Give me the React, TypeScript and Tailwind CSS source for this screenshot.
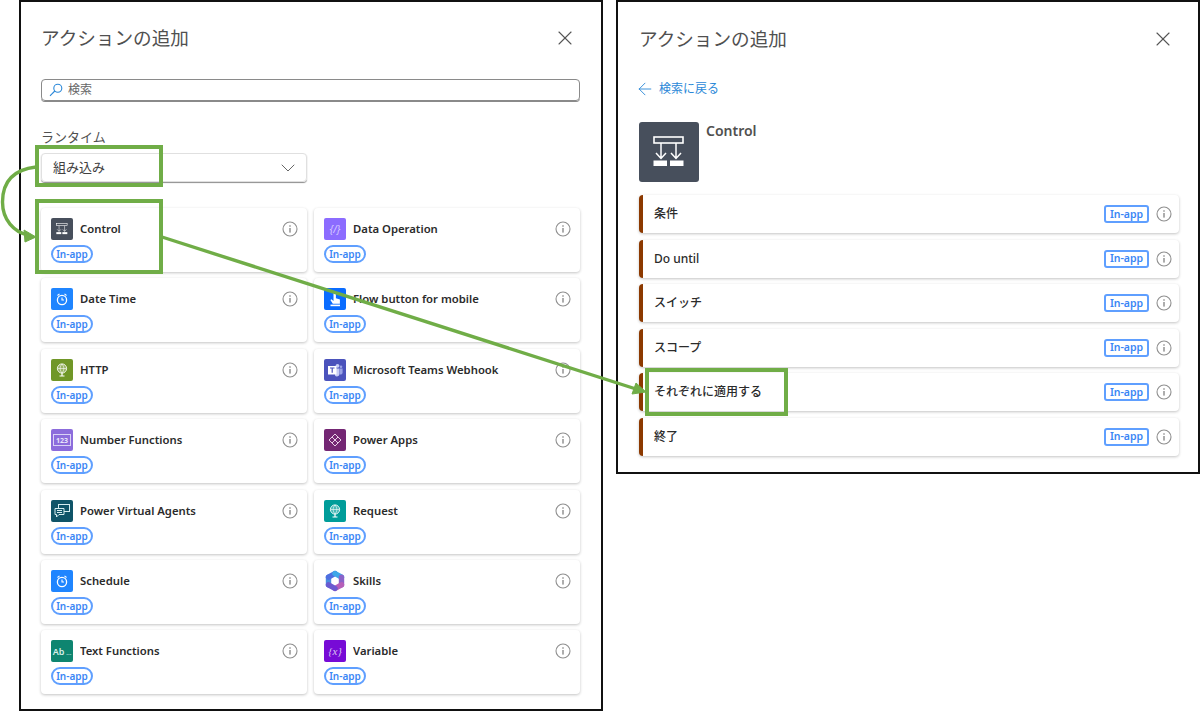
import { X, ChevronDown, ArrowLeft } from "lucide-react"
import type { ReactNode } from "react"

const font = "[font-family:'Noto_Sans','Noto_Sans_CJK_JP',sans-serif]"

function InfoIcon() {
  return (
    <svg width="16" height="16" viewBox="0 0 16 16" fill="none" className="shrink-0">
      <circle cx="8" cy="8" r="7" stroke="#8f8f8f" strokeWidth="1.1" />
      <rect x="7.4" y="7" width="1.2" height="4.6" fill="#777" />
      <circle cx="8" cy="5" r="0.8" fill="#777" />
    </svg>
  )
}

function ControlGlyph({ size }: { size: number }) {
  return (
    <svg width={size} height={size} viewBox="0 0 60 60" fill="none">
      <rect x="15" y="15" width="29" height="6" stroke="#fff" strokeWidth="1.6" />
      <path d="M22 21V36.5M37 21V36.5M17 31l5 5.5 5-5.5M32 31l5 5.5 5-5.5" stroke="#fff" strokeWidth="1.5" />
      <rect x="14.5" y="38.5" width="13.5" height="5.5" fill="#fff" />
      <rect x="31" y="38.5" width="13.5" height="5.5" fill="#fff" />
    </svg>
  )
}

function Clock() {
  return (
    <svg width="22" height="22" viewBox="0 0 22 22" fill="none">
      <circle cx="11" cy="12" r="4.6" stroke="#fff" strokeWidth="1.3" />
      <path d="M11 9.5V12h2M6.5 7.5l2-1.6M15.5 7.5l-2-1.6" stroke="#fff" strokeWidth="1.1" />
    </svg>
  )
}

function Globe() {
  return (
    <svg width="22" height="22" viewBox="0 0 22 22" fill="none">
      <circle cx="11" cy="9.5" r="4.6" fill="#fff" fillOpacity="0.3" stroke="#fff" strokeWidth="1" opacity="0.9" />
      <path d="M6.5 9.5h9M11 5c-2.4 2.6-2.4 6.4 0 9M11 5c2.4 2.6 2.4 6.4 0 9" stroke="#fff" strokeWidth="0.6" />
      <path d="M11 14v2.5M8.5 17h5" stroke="#fff" strokeWidth="1.2" />
    </svg>
  )
}

const icons: Record<string, ReactNode> = {
  Control: <ControlGlyph size={22} />,
  "Data Operation": (
    <span className="text-[10px] italic leading-none text-[#d9ccff]">{"{/}"}</span>
  ),
  "Date Time": <Clock />,
  "Flow button for mobile": (
    <svg width="22" height="22" viewBox="0 0 22 22" fill="#fff">
      <path d="M9.5 4h2.4v6.2l4 1.4v4.2H8.8L6.4 12l1-.8 2.1 1.7z" />
      <rect x="6.5" y="16.6" width="9.5" height="1.6" />
    </svg>
  ),
  HTTP: <Globe />,
  "Microsoft Teams Webhook": (
    <svg width="22" height="22" viewBox="0 0 22 22">
      <circle cx="13.5" cy="6.8" r="1.9" fill="#c7cdf5" />
      <circle cx="17" cy="7.8" r="1.3" fill="#9aa3e6" />
      <path d="M11 9.5h4.5v5.5a2.5 2.5 0 0 1-4.5 1.4z" fill="#c7cdf5" />
      <path d="M15.8 9.5h2.8v4a2 2 0 0 1-2.8 1.8z" fill="#9aa3e6" />
      <rect x="4" y="7" width="8.5" height="8.5" fill="#fff" />
      <path d="M6 9h4.5M8.2 9v4.8" stroke="#4b53bc" strokeWidth="1.2" />
    </svg>
  ),
  "Number Functions": (
    <div className="flex h-[12px] w-[18px] items-center justify-center border border-[#d9d2f5] text-[7px] font-bold leading-none text-[#e9e5fb]">
      123
    </div>
  ),
  "Power Apps": (
    <svg width="22" height="22" viewBox="0 0 22 22" fill="none" stroke="#e8cfe6" strokeWidth="1">
      <path d="M11 5l3 3-3 3-3-3zM11 11l3 3-3 3-3-3zM8 8l3 3-3 3-3-3zM14 8l3 3-3 3-3-3z" />
    </svg>
  ),
  "Power Virtual Agents": (
    <svg width="22" height="22" viewBox="0 0 22 22" fill="none" stroke="#d5ecef" strokeWidth="1">
      <rect x="7.5" y="4.5" width="11" height="7" />
      <path d="M4 8.5h9v6H8l-2.5 2.5v-2.5H4z" fill="#0f5468" />
      <path d="M6 10.5h5M6 12.5h5" />
    </svg>
  ),
  Request: <Globe />,
  Schedule: <Clock />,
  Skills: (
    <svg width="22" height="22" viewBox="0 0 22 22" fill="none" strokeWidth="5.4" strokeLinecap="round">
      <path d="M4.5 14.8V7.2" stroke="#4a8fe0" />
      <path d="M4.5 7.2L11 3.5" stroke="#4f6fe0" />
      <path d="M11 3.5l6.5 3.7" stroke="#3fa7e8" />
      <path d="M17.5 7.2v7.6" stroke="#8a63c9" />
      <path d="M17.5 14.8L11 18.5" stroke="#b65fb8" />
      <path d="M11 18.5l-6.5-3.7" stroke="#6a5ad0" />
    </svg>
  ),
  "Text Functions": (
    <div className="flex items-baseline gap-[2px] text-[9px] font-semibold leading-none text-[#d8efe9]">
      Ab<span className="text-[6px]">...</span>
    </div>
  ),
  Variable: (
    <span className="text-[11px] italic leading-none text-[#dcc4f2] [font-family:'Liberation_Serif',serif]">{"{x}"}</span>
  ),
}

const connectors = [
  { name: "Control", color: "bg-[#474f5c]" },
  { name: "Data Operation", color: "bg-[#8c6cff]" },
  { name: "Date Time", color: "bg-[#1f85ff]" },
  { name: "Flow button for mobile", color: "bg-[#0a6cff]" },
  { name: "HTTP", color: "bg-[#709727]" },
  { name: "Microsoft Teams Webhook", color: "bg-[#4b53bc]" },
  { name: "Number Functions", color: "bg-[#8c6cdc]" },
  { name: "Power Apps", color: "bg-[#742774]" },
  { name: "Power Virtual Agents", color: "bg-[#0f5468]" },
  { name: "Request", color: "bg-[#009d9a]" },
  { name: "Schedule", color: "bg-[#1f85ff]" },
  { name: "Skills", color: "bg-transparent" },
  { name: "Text Functions", color: "bg-[#0e8570]" },
  { name: "Variable", color: "bg-[#770bd6]" },
]

const actions = ["条件", "Do until", "スイッチ", "スコープ", "それぞれに適用する", "終了"]

function ConnectorCard({ name, color }: { name: string; color: string }) {
  return (
    <div className="flex h-[64px] flex-col rounded-sm bg-white pl-[10px] pr-[9px] pt-[10px] shadow-[0_1px_3px_rgba(0,0,0,0.24)]">
      <div className="flex items-center">
        <div className={`flex h-[22px] w-[22px] shrink-0 items-center justify-center rounded-[2px] ${color}`}>
          {icons[name]}
        </div>
        <span className="ml-[7px] flex-1 truncate text-[11.3px] font-semibold leading-[22px] text-[#2b2b2b]">{name}</span>
        <InfoIcon />
      </div>
      <div className="mt-[5px] flex h-[18px] w-[42px] items-center justify-center rounded-full border-2 border-[#5f9fff] text-[10px] font-semibold leading-none text-[#3a86f5]">
        In-app
      </div>
    </div>
  )
}

function ActionRow({ label }: { label: string }) {
  return (
    <div className="flex h-[38px] items-center rounded-sm border-l-4 border-[#8c3900] bg-white pl-[11px] pr-[7px] shadow-[0_1px_3px_rgba(0,0,0,0.24)]">
      <span className="flex-1 text-[12px] font-medium text-[#2b2b2b]">{label}</span>
      <div className="flex h-[18px] w-[45px] items-center justify-center rounded-[3px] border-2 border-[#5f9fff] text-[10.5px] font-semibold leading-none text-[#3a86f5]">
        In-app
      </div>
      <div className="ml-[7px]">
        <InfoIcon />
      </div>
    </div>
  )
}

function PanelTitle() {
  return (
    <div className="flex items-center justify-between">
      <h1 className="text-[18.6px] font-normal leading-[26px] text-[#505050]">アクションの追加</h1>
      <X className="h-[24px] w-[24px] text-[#555]" strokeWidth={1.1} />
    </div>
  )
}

export default function App() {
  return (
    <div className={`relative flex h-[711px] w-[1200px] items-start gap-[13px] overflow-hidden bg-white pl-[19px] ${font}`}>
      {/* search panel */}
      <div className="h-[711px] w-[584px] shrink-0 border-2 border-[#111] px-[20px] pt-[23px]">
        <div className="pr-[4px]">
          <PanelTitle />
        </div>
        <div className="mt-[28px] flex h-[22px] w-[539px] items-center rounded-sm border border-[#8a8a8a] pl-[7px] shadow-[0_1px_0_#8a8a8a]">
          <svg width="14" height="14" viewBox="0 0 14 14" fill="none" stroke="#2b88d8" strokeWidth="1.1">
            <circle cx="8.8" cy="5.2" r="4" />
            <path d="M5.8 8L1 12.8" />
          </svg>
          <span className="ml-[5px] text-[12px] text-[#666]">検索</span>
        </div>
        <div className="mt-[26px] text-[13px] leading-[20px] text-[#505050]">ランタイム</div>
        <div className="mt-[6px] flex h-[29px] w-[266px] items-center justify-between rounded-sm border border-[#e0e0e0] pl-[11px] pr-[6px] shadow-[0_1px_1px_rgba(0,0,0,0.45)]">
          <span className="text-[13px] text-[#404040]">組み込み</span>
          <ChevronDown className="h-[24px] w-[24px] text-[#666]" strokeWidth={1} />
        </div>
        <div className="mt-[26px] grid w-[539px] grid-cols-[266px_266px] gap-x-[7px] gap-y-[6.4px]">
          {connectors.map((c) => (
            <ConnectorCard key={c.name} name={c.name} color={c.color} />
          ))}
        </div>
      </div>

      {/* detail panel */}
      <div className="h-[474px] w-[584px] shrink-0 border-2 border-[#111] pl-[21px] pr-[18px] pt-[24px]">
        <div className="pr-[5px]">
          <PanelTitle />
        </div>
        <div className="-ml-[4px] mt-[28px] flex h-[18px] items-center text-[#2b88d8]">
          <ArrowLeft className="h-[20px] w-[20px]" strokeWidth={1.1} />
          <span className="ml-[4px] text-[12px]">検索に戻る</span>
        </div>
        <div className="mt-[24px] flex items-start">
          <div className="flex h-[60px] w-[60px] items-center justify-center rounded-[3px] bg-[#474f5c]">
            <ControlGlyph size={60} />
          </div>
          <span className="ml-[7px] text-[14px] font-semibold leading-[18px] text-[#505050]">Control</span>
        </div>
        <div className="mt-[13px] flex w-[540px] flex-col gap-[6.5px]">
          {actions.map((a) => (
            <ActionRow key={a} label={a} />
          ))}
        </div>
      </div>

      {/* green annotations */}
      <div className="pointer-events-none absolute left-[35px] top-[145px] h-[42px] w-[128px] border-4 border-[#70ad47]" />
      <div className="pointer-events-none absolute left-[35px] top-[199px] h-[75px] w-[128px] border-4 border-[#70ad47]" />
      <div className="pointer-events-none absolute left-[645px] top-[368px] h-[48px] w-[143px] border-4 border-[#70ad47]" />
      <svg className="pointer-events-none absolute left-0 top-0" width="1200" height="711" fill="none">
        <path d="M36 167C10 170 2.5 185 2.5 202C2.5 220 14 232 28 235" stroke="#70ad47" strokeWidth="3.4" />
        <path d="M36 237L24 230L25 242Z" fill="#70ad47" stroke="#70ad47" />
        <path d="M162 237L636 389" stroke="#70ad47" strokeWidth="3.4" />
        <path d="M646 392L632 394L636 383Z" fill="#70ad47" stroke="#70ad47" />
      </svg>
    </div>
  )
}
